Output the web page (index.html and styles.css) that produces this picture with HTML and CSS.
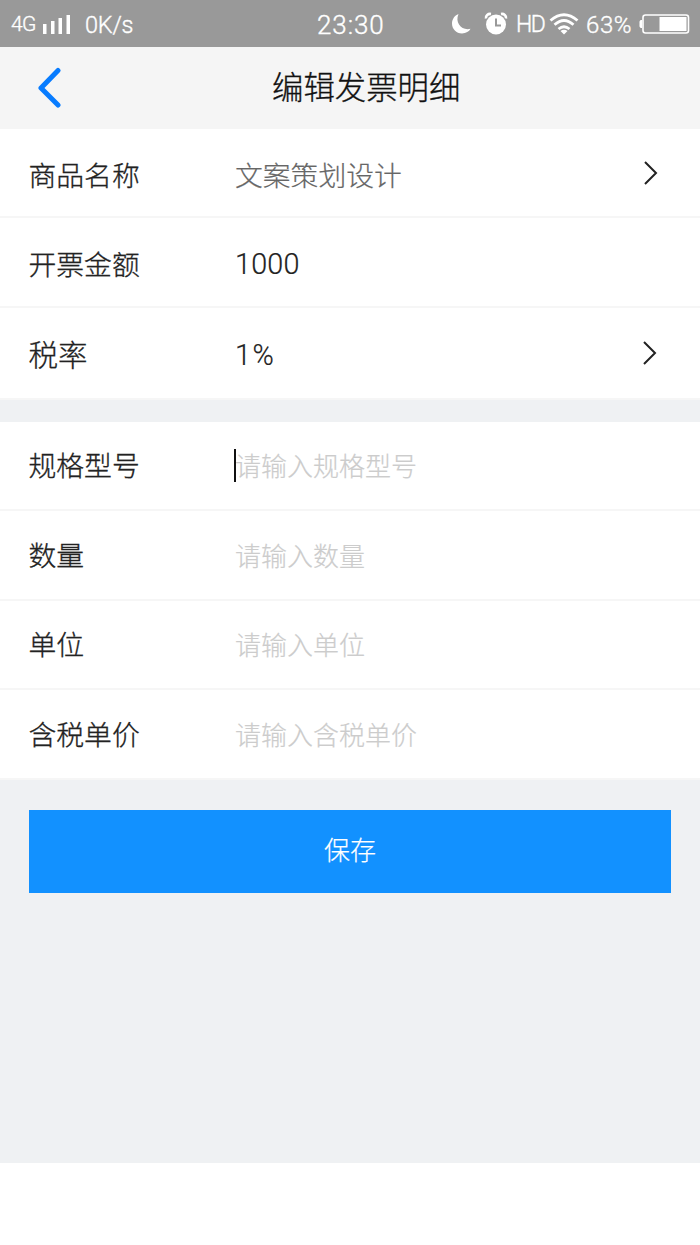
FILE: index.html
```html
<!DOCTYPE html>
<html lang="zh-CN">
<head>
<meta charset="utf-8">
<title>编辑发票明细</title>
<link rel="stylesheet" href="styles.css">
</head>
<body>
<div class="status">
  <span class="network">4G</span>
  <svg class="signal" width="28" height="21" viewBox="0 0 28 21" fill="#fff"><path d="M0 10h3.500v10H0zM8 7h3.500v13H8zM15.500 4H19v16h-3.500zM23.500 1H27v19h-3.500z"/></svg>
  <span class="speed">0K/s</span>
  <span class="clock">23:30</span>
  <svg class="moon" width="20" height="22" viewBox="0 0 20 22"><path d="M7.500 1C3.500 2.500 1 6.500 1 10.500c0 5.500 4.300 10 10 10 4 0 7.200-2 8.500-4.700C11 18 3.500 10 7.500 1z" fill="#fff"/></svg>
  <svg class="alarm" width="24" height="24" viewBox="0 0 24 24"><path d="M2 6.500C1.500 3.500 4 1.500 7 2M22 6.500c.5-3-2-5-5-4.500" fill="none" stroke="#fff" stroke-width="2.600"/><circle cx="12" cy="12.500" r="10" fill="#fff"/><path d="M12 6.500v7h5" fill="none" stroke="#999" stroke-width="2"/></svg>
  <span class="hd">HD</span>
  <svg class="wifi" width="30" height="22" viewBox="0 0 30 22" fill="none" stroke="#fff" stroke-width="2.800"><path d="M1.500 7.500Q15-4 28.500 7.500M5.500 11.800q9.500-8.500 19 0M9.500 16q5.500-4.500 11 0"/><path d="M11.500 18q3.500-2.500 7 0L15 21.500z" fill="#fff" stroke="none"/></svg>
  <span class="percent">63%</span>
  <svg class="battery" width="51" height="20" viewBox="0 0 51 20"><path d="M3 6C0 6 .5 8 .5 10S0 14 3 14z" fill="#fff"/><rect x="4" y="1" width="45.500" height="18" rx="2.500" fill="none" stroke="#fff" stroke-width="1.600"/><path d="M20.500 3H47.500v14h-27z" fill="#fff"/></svg>
</div>
<header class="header">
  <svg class="back" width="26" height="42" viewBox="0 0 26 42"><path d="M23 3.500L6 21l17 17" fill="none" stroke="#087cff" stroke-width="5" stroke-linecap="round" stroke-linejoin="round"/></svg>
  <h1 class="title">编辑发票明细</h1>
</header>
<main class="page">
  <section class="group group-main">
    <div class="row"><span class="label">商品名称</span><span class="value muted">文案策划设计</span><svg class="arrow" width="16" height="26" viewBox="0 0 16 26"><path d="M2 2l11 11L2 24"/></svg></div>
    <div class="row"><span class="label">开票金额</span><span class="value number">1000</span></div>
    <div class="row rate"><span class="label">税率</span><span class="value number">1%</span><svg class="arrow" width="16" height="26" viewBox="0 0 16 26"><path d="M2 2l11 11L2 24"/></svg></div>
  </section>
  <section class="group group-extra">
    <div class="row"><span class="label">规格型号</span><span class="value hint focused">请输入规格型号</span></div>
    <div class="row"><span class="label">数量</span><span class="value hint">请输入数量</span></div>
    <div class="row"><span class="label">单位</span><span class="value hint">请输入单位</span></div>
    <div class="row"><span class="label">含税单价</span><span class="value hint">请输入含税单价</span></div>
  </section>
  <button class="save">保存</button>
</main>
</body>
</html>
```
FILE: styles.css
```css
* { box-sizing: border-box; }
body {
  margin: 0;
  height: 1245px;
  background: #fff;
  color: #222;
  font-family: "Noto Sans CJK SC", sans-serif;
  font-weight: 300;
}
svg { display: block; flex: none; }
.status {
  display: flex;
  align-items: center;
  height: 47px;
  padding: 2px 10px 0 11px;
  background: #999;
  color: #fff;
  font: 300 24px/45px Roboto, sans-serif;
  -webkit-text-stroke: .35px;
  white-space: nowrap;
}
.status span { flex: none; }
.network { width: 32px; font-size: 21px; letter-spacing: -.7px; }
.speed { width: 232px; margin-left: 14px; padding-top: 1px; font-size: 23.5px; letter-spacing: -.2px; }
.clock { width: 134px; padding-top: 1px; font-size: 26px; letter-spacing: .9px; }
.moon { margin-top: -2px; }
.alarm { margin: -2px 0 0 13px; }
.hd { width: 32px; margin-left: 8px; font-size: 23px; letter-spacing: -1.500px; }
.wifi { margin: -2px 0 0 1px; }
.percent { width: 54px; margin-left: 6px; padding: 1px 0 0 1px; letter-spacing: .6px; }
.battery { margin-top: -2px; }
.header {
  display: flex;
  align-items: center;
  height: 82px;
  padding-left: 35px;
  background: #f5f5f5;
}
.title {
  margin: 0 0 4px 211px;
  color: #111;
  font-size: 31.4px;
  font-weight: 300;
  line-height: 44px;
  -webkit-text-stroke: .3px;
}
.page { height: 1034px; background: #eff1f3; }
.group { background: #fff; }
.group-main { margin-bottom: 22px; }
.row {
  display: flex;
  align-items: center;
  height: 89.3px;
  padding: 3px 41px 0 29px;
  border-bottom: 2px solid #f6f6f6;
}
.rate { height: 92px; padding-right: 42px; }
.group-extra .row { height: 89.5px; padding-top: 0; }
.group-main .label { padding-bottom: 1px; }
.label { width: 206px; margin-left: -.5px; margin-right: .5px; font-size: 27.8px; line-height: 40px; -webkit-text-stroke: .3px; }
.group-extra .label { padding-bottom: 2px; }
.rate .label { padding-bottom: 2px; font-size: 29.5px; }
.value { font-size: 27.8px; line-height: 40px; -webkit-text-stroke: .2px; }
.muted { color: #666; }
.number { padding-top: 2px; font-family: Roboto, sans-serif; font-size: 28.8px; letter-spacing: .2px; }
.rate .number { letter-spacing: 1.500px; }
.hint { color: #ccc; font-size: 26px; }
.focused { position: relative; }
.focused::before {
  content: "";
  position: absolute;
  left: -1.500px;
  top: 4px;
  width: 2px;
  height: 33px;
  background: #111;
}
.arrow { margin: 0 0 3px auto; fill: none; stroke: #222; stroke-width: 2; }
.save {
  display: block;
  width: 642px;
  height: 83px;
  margin: 30px 0 0 29px;
  padding: 0 0 5px;
  border: 0;
  background: #1291ff;
  color: #fff;
  font: 300 26px/38px "Noto Sans CJK SC", sans-serif;
  -webkit-text-stroke: .2px;
}
```
